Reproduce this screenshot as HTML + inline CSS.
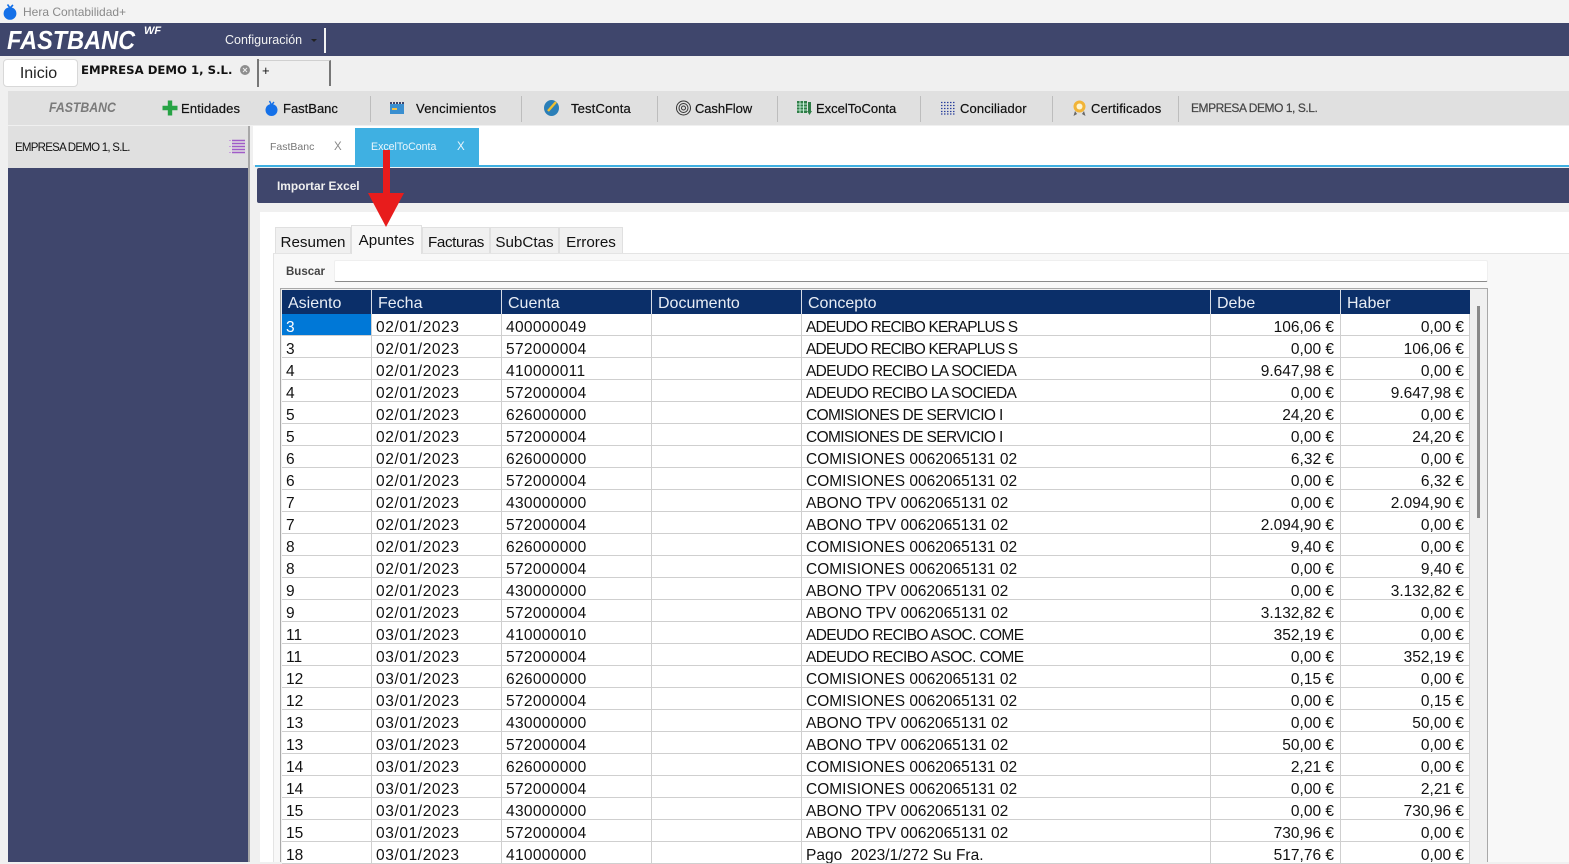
<!DOCTYPE html>
<html lang="es"><head><meta charset="utf-8"><title>Hera Contabilidad+</title>
<style>
*{box-sizing:border-box}
html,body{margin:0;padding:0;width:1569px;height:862px;overflow:hidden;background:#f0f0f0;font-family:"Liberation Sans",sans-serif;color:#000}
.a{position:absolute;white-space:nowrap}
.tb{font-size:13px;top:101px;line-height:16px;color:#111;letter-spacing:.15px;-webkit-text-stroke:.2px #111}
.sep{position:absolute;top:96px;height:26px;width:1px;background:#bdbdbd}
.st{position:absolute;top:227px;height:26px;background:#f0f0f0;border:1px solid #e0e0e0;border-bottom:0;font-size:15.2px;line-height:29px;text-align:center;color:#111}
table{position:absolute;left:282px;top:290px;width:1188px;border-collapse:separate;border-spacing:0;table-layout:fixed;font-size:15.5px;background:#fff}
th{background:#0b2f69;color:#e8edf5;font-weight:normal;text-align:left;height:24px;padding:4px 0 0 6px;border-right:1px solid #d5dbe6;font-size:16px;line-height:20px}
th:last-child{border-right:0}
td{height:22px;padding:7px 4px 0 4px;border-right:1px solid #cfcfcf;border-bottom:1px solid #cfcfcf;line-height:14px;white-space:nowrap;overflow:hidden;color:#111}
td:nth-child(2){letter-spacing:.6px}
td:nth-child(3){letter-spacing:.33px}
td.n{text-align:right;padding-right:5px}
td:nth-child(6).n{padding-right:6px}
td.s{background:#0078d7;color:#fff}
.k{letter-spacing:-.85px}.v{letter-spacing:-.62px}.l{letter-spacing:-.68px}.c{letter-spacing:-.63px}
</style></head><body>

<div class="a" style="left:0;top:0;width:1569px;height:23px;background:#f3f3f3"></div>
<svg class="a" style="left:3px;top:3px" width="15" height="17" viewBox="0 0 15 17"><ellipse cx="7" cy="10.500" rx="6.400" ry="6.300" fill="#1470e8"/><path d="M7 5 L4.500 1.500 M7 5 L10 2" stroke="#1470e8" stroke-width="1.600" fill="none"/></svg>
<div class="a" style="left:23px;top:4px;font-size:12px;line-height:16px;color:#8a8a8a">Hera Contabilidad+</div>

<div class="a" style="left:0;top:23px;width:1569px;height:33px;background:#3f466c"></div>
<div class="a" style="left:7px;top:25px;font-size:26px;line-height:30px;font-weight:bold;font-style:italic;color:#fff;transform:scaleX(.905);transform-origin:0 0">FASTBANC</div>
<div class="a" style="left:144px;top:25px;font-size:11px;line-height:13px;font-weight:bold;font-style:italic;color:#fff">WF</div>
<div class="a" style="left:225px;top:32px;font-size:12.500px;line-height:16px;color:#f2f2f2">Configuración</div>
<div class="a" style="left:311px;top:39px;width:0;height:0;border:3px solid transparent;border-top:3px solid #222"></div>
<div class="a" style="left:324px;top:28px;width:2px;height:25px;background:#f2f2f2"></div>

<div class="a" style="left:3px;top:59px;width:75px;height:28px;background:#fff;border:1px solid #d8d8d8;border-radius:4px;font-size:16px;line-height:27px;padding-right:4px;text-align:center;color:#222">Inicio</div>
<div class="a" style="left:81px;top:62px;font-size:11.700px;line-height:16px;font-weight:bold;font-family:'DejaVu Sans','Liberation Sans',sans-serif;color:#111">EMPRESA DEMO 1, S.L.</div>
<svg class="a" style="left:239px;top:64px" width="12" height="12" viewBox="0 0 12 12"><circle cx="6" cy="6" r="5" fill="#8e8e8e"/><path d="M4 4L8 8M8 4L4 8" stroke="#eee" stroke-width="1"/></svg>
<div class="a" style="left:257px;top:59px;width:2px;height:28px;background:#777"></div>
<div class="a" style="left:259px;top:60px;width:72px;height:26px;border-top:1px solid #d0d0d0;border-right:2px solid #777;font-size:13px;line-height:20px;padding-left:3px;color:#111">+</div>

<div class="a" style="left:8px;top:91px;width:1561px;height:34px;background:#e0e0e0"></div>
<div class="a" style="left:49px;top:100px;font-size:13.500px;line-height:16px;font-weight:bold;font-style:italic;color:#7a7a7a;transform:scaleX(.91);transform-origin:0 0">FASTBANC</div>
<svg class="a" style="left:162px;top:100px" width="16" height="16" viewBox="0 0 16 16"><path d="M8 0.500V15.500M0.500 8H15.500" stroke="#27a345" stroke-width="4.400"/></svg>
<div class="a tb" style="left:181px">Entidades</div>
<svg class="a" style="left:265px;top:100px" width="14" height="16" viewBox="0 0 14 16"><ellipse cx="6.500" cy="10" rx="6" ry="6" fill="#1470e8"/><path d="M6.500 5L4.500 1M6.500 5L9 2" stroke="#1470e8" stroke-width="1.400" fill="none"/></svg>
<div class="a tb" style="left:283px;letter-spacing:0">FastBanc</div>
<div class="sep" style="left:370px"></div>
<svg class="a" style="left:389px;top:100px" width="16" height="15" viewBox="0 0 16 15"><rect x="1" y="4" width="14" height="10" fill="#3a8fd0"/><path d="M1 3H15" stroke="#3f466c" stroke-width="2" stroke-dasharray="2 1"/><rect x="3" y="8" width="5" height="2" fill="#f0c04a"/></svg>
<div class="a tb" style="left:416px;letter-spacing:.25px">Vencimientos</div>
<div class="sep" style="left:521px"></div>
<svg class="a" style="left:543px;top:99px" width="18" height="18" viewBox="0 0 18 18"><ellipse cx="8.500" cy="9" rx="7.500" ry="8" fill="#2b7fb8"/><path d="M5 12L13 3" stroke="#f0c030" stroke-width="2.400"/></svg>
<div class="a tb" style="left:571px">TestConta</div>
<div class="sep" style="left:657px"></div>
<svg class="a" style="left:675px;top:100px" width="17" height="16" viewBox="0 0 17 16" fill="none" stroke="#333"><circle cx="8.500" cy="8" r="7"/><circle cx="8.500" cy="8" r="4.500"/><circle cx="8.500" cy="8" r="2"/></svg>
<div class="a tb" style="left:695px;letter-spacing:-.1px">CashFlow</div>
<div class="sep" style="left:777px"></div>
<svg class="a" style="left:796px;top:99px" width="17" height="17" viewBox="0 0 17 17"><rect x="1" y="2" width="10" height="12" fill="#2e7d46"/><path d="M1 5H11M1 8H11M1 11H11M4 2V14M7.500 2V14" stroke="#dfe" stroke-width=".8"/><rect x="12" y="3" width="3" height="9" fill="#2e7d46"/><path d="M11 12H16L13.500 16Z" fill="#2e7d46"/></svg>
<div class="a tb" style="left:816px;letter-spacing:0">ExcelToConta</div>
<div class="sep" style="left:920px"></div>
<svg class="a" style="left:941px;top:101px" width="15" height="14" viewBox="0 0 15 14"><path d="M0 1.500H15M0 4.500H15M0 7.500H15M0 10.500H15M0 13H15" stroke="#2a3f9d" stroke-dasharray="1.500 1.500" stroke-width="1.300"/></svg>
<div class="a tb" style="left:960px">Conciliador</div>
<div class="sep" style="left:1052px"></div>
<svg class="a" style="left:1072px;top:100px" width="15" height="17" viewBox="0 0 15 17"><circle cx="7.500" cy="6.500" r="6" fill="#f1b437"/><circle cx="7.500" cy="6.500" r="3" fill="#fff5d0"/><path d="M3 11L1.500 16L5 14ZM12 11L13.500 16L10 14Z" fill="#666"/></svg>
<div class="a tb" style="left:1091px">Certificados</div>
<div class="sep" style="left:1178px"></div>
<div class="a" style="left:1191px;top:100px;font-size:12px;line-height:16px;color:#444;letter-spacing:-.45px;-webkit-text-stroke:.2px #444">EMPRESA DEMO 1, S.L.</div>

<div class="a" style="left:8px;top:126px;width:240px;height:42px;background:#e0e0e0"></div>
<div class="a" style="left:15px;top:140px;font-size:11.500px;line-height:16px;letter-spacing:-.75px;color:#111">EMPRESA DEMO 1, S.L.</div>
<svg class="a" style="left:229px;top:139px" width="17" height="16" viewBox="0 0 17 16"><path d="M3 1.500H16M3 4.500H16M3 7.500H16M3 10.500H16M3 13.500H16" stroke="#a05cc8" stroke-width="1.500"/><path d="M0 1.500H2M0 7.500H2M0 13.500H2" stroke="#c9a0e0" stroke-width="1"/></svg>
<div class="a" style="left:8px;top:168px;width:240px;height:694px;background:#3f466c"></div>
<div class="a" style="left:248px;top:126px;width:2px;height:736px;background:#a8a8a8"></div>

<div class="a" style="left:253px;top:126px;width:1316px;height:39px;background:#fff"></div>
<div class="a" style="left:270px;top:139px;font-size:10.500px;line-height:16px;color:#777">FastBanc</div>
<div class="a" style="left:334px;top:139px;font-size:11.500px;line-height:16px;color:#888">X</div>
<div class="a" style="left:355px;top:128px;width:124px;height:37px;background:#3fb0e2"></div>
<div class="a" style="left:371px;top:139px;font-size:10.600px;line-height:16px;color:#eaf6fc">ExcelToConta</div>
<div class="a" style="left:457px;top:139px;font-size:11.500px;line-height:16px;color:#eaf6fc">X</div>
<div class="a" style="left:255px;top:165px;width:1314px;height:2px;background:#3fb0e2"></div>

<div class="a" style="left:257px;top:168px;width:1312px;height:35px;background:#3f466c;border-radius:2px 0 0 2px"></div>
<div class="a" style="left:277px;top:178px;font-size:11.900px;line-height:16px;font-weight:bold;color:#f0f0f0">Importar Excel</div>

<div class="a" style="left:260px;top:212px;width:1309px;height:650px;background:#fff"></div>
<div class="a" style="left:273px;top:253px;width:1296px;height:609px;background:#f8f8f8;border-top:1px solid #e4e4e4;border-left:1px solid #e4e4e4"></div>

<div class="st" style="left:275px;width:76px">Resumen</div>
<div class="st" style="left:351px;top:225px;width:71px;height:29px;background:#f8f8f8;z-index:2">Apuntes</div>
<div class="st" style="left:422px;width:68px;letter-spacing:-.4px">Facturas</div>
<div class="st" style="left:490px;width:69px">SubCtas</div>
<div class="st" style="left:559px;width:64px">Errores</div>

<div class="a" style="left:286px;top:265px;font-size:11.500px;line-height:15px;font-weight:bold;color:#444">Buscar</div>
<div class="a" style="left:334px;top:260px;width:1154px;height:22px;background:#fff;border:1px solid #efefef;border-bottom:1px solid #8a8a8a;border-radius:2px"></div>

<div class="a" style="left:280px;top:288px;width:1208px;height:574px;background:#f0f0f0;border:1px solid #a8a8a8;border-bottom:0"></div>
<div class="a" style="left:1477px;top:306px;width:3px;height:212px;background:#8a8a8a"></div>

<table>
<colgroup><col style="width:90px"><col style="width:130px"><col style="width:150px"><col style="width:150px"><col style="width:409px"><col style="width:130px"><col style="width:129px"></colgroup>
<tr><th>Asiento</th><th>Fecha</th><th>Cuenta</th><th>Documento</th><th>Concepto</th><th>Debe</th><th>Haber</th></tr>
<tr><td class="s">3</td><td>02/01/2023</td><td>400000049</td><td></td><td class="k">ADEUDO RECIBO KERAPLUS S</td><td class="n">106,06 €</td><td class="n">0,00 €</td></tr>
<tr><td>3</td><td>02/01/2023</td><td>572000004</td><td></td><td class="k">ADEUDO RECIBO KERAPLUS S</td><td class="n">0,00 €</td><td class="n">106,06 €</td></tr>
<tr><td>4</td><td>02/01/2023</td><td>410000011</td><td></td><td class="l">ADEUDO RECIBO LA SOCIEDA</td><td class="n">9.647,98 €</td><td class="n">0,00 €</td></tr>
<tr><td>4</td><td>02/01/2023</td><td>572000004</td><td></td><td class="l">ADEUDO RECIBO LA SOCIEDA</td><td class="n">0,00 €</td><td class="n">9.647,98 €</td></tr>
<tr><td>5</td><td>02/01/2023</td><td>626000000</td><td></td><td class="v">COMISIONES DE SERVICIO I</td><td class="n">24,20 €</td><td class="n">0,00 €</td></tr>
<tr><td>5</td><td>02/01/2023</td><td>572000004</td><td></td><td class="v">COMISIONES DE SERVICIO I</td><td class="n">0,00 €</td><td class="n">24,20 €</td></tr>
<tr><td>6</td><td>02/01/2023</td><td>626000000</td><td></td><td>COMISIONES 0062065131 02</td><td class="n">6,32 €</td><td class="n">0,00 €</td></tr>
<tr><td>6</td><td>02/01/2023</td><td>572000004</td><td></td><td>COMISIONES 0062065131 02</td><td class="n">0,00 €</td><td class="n">6,32 €</td></tr>
<tr><td>7</td><td>02/01/2023</td><td>430000000</td><td></td><td>ABONO TPV 0062065131 02</td><td class="n">0,00 €</td><td class="n">2.094,90 €</td></tr>
<tr><td>7</td><td>02/01/2023</td><td>572000004</td><td></td><td>ABONO TPV 0062065131 02</td><td class="n">2.094,90 €</td><td class="n">0,00 €</td></tr>
<tr><td>8</td><td>02/01/2023</td><td>626000000</td><td></td><td>COMISIONES 0062065131 02</td><td class="n">9,40 €</td><td class="n">0,00 €</td></tr>
<tr><td>8</td><td>02/01/2023</td><td>572000004</td><td></td><td>COMISIONES 0062065131 02</td><td class="n">0,00 €</td><td class="n">9,40 €</td></tr>
<tr><td>9</td><td>02/01/2023</td><td>430000000</td><td></td><td>ABONO TPV 0062065131 02</td><td class="n">0,00 €</td><td class="n">3.132,82 €</td></tr>
<tr><td>9</td><td>02/01/2023</td><td>572000004</td><td></td><td>ABONO TPV 0062065131 02</td><td class="n">3.132,82 €</td><td class="n">0,00 €</td></tr>
<tr><td>11</td><td>03/01/2023</td><td>410000010</td><td></td><td class="c">ADEUDO RECIBO ASOC. COME</td><td class="n">352,19 €</td><td class="n">0,00 €</td></tr>
<tr><td>11</td><td>03/01/2023</td><td>572000004</td><td></td><td class="c">ADEUDO RECIBO ASOC. COME</td><td class="n">0,00 €</td><td class="n">352,19 €</td></tr>
<tr><td>12</td><td>03/01/2023</td><td>626000000</td><td></td><td>COMISIONES 0062065131 02</td><td class="n">0,15 €</td><td class="n">0,00 €</td></tr>
<tr><td>12</td><td>03/01/2023</td><td>572000004</td><td></td><td>COMISIONES 0062065131 02</td><td class="n">0,00 €</td><td class="n">0,15 €</td></tr>
<tr><td>13</td><td>03/01/2023</td><td>430000000</td><td></td><td>ABONO TPV 0062065131 02</td><td class="n">0,00 €</td><td class="n">50,00 €</td></tr>
<tr><td>13</td><td>03/01/2023</td><td>572000004</td><td></td><td>ABONO TPV 0062065131 02</td><td class="n">50,00 €</td><td class="n">0,00 €</td></tr>
<tr><td>14</td><td>03/01/2023</td><td>626000000</td><td></td><td>COMISIONES 0062065131 02</td><td class="n">2,21 €</td><td class="n">0,00 €</td></tr>
<tr><td>14</td><td>03/01/2023</td><td>572000004</td><td></td><td>COMISIONES 0062065131 02</td><td class="n">0,00 €</td><td class="n">2,21 €</td></tr>
<tr><td>15</td><td>03/01/2023</td><td>430000000</td><td></td><td>ABONO TPV 0062065131 02</td><td class="n">0,00 €</td><td class="n">730,96 €</td></tr>
<tr><td>15</td><td>03/01/2023</td><td>572000004</td><td></td><td>ABONO TPV 0062065131 02</td><td class="n">730,96 €</td><td class="n">0,00 €</td></tr>
<tr><td>18</td><td>03/01/2023</td><td>410000000</td><td></td><td>Pago&nbsp; 2023/1/272 Su Fra.</td><td class="n">517,76 €</td><td class="n">0,00 €</td></tr>
</table>

<svg class="a" style="left:365px;top:150px;z-index:5" width="42" height="80" viewBox="0 0 42 80"><rect x="18" y="0" width="7" height="46" fill="#e81c1c"/><path d="M3 43H39L21 77Z" fill="#e81c1c"/></svg>

</body></html>
